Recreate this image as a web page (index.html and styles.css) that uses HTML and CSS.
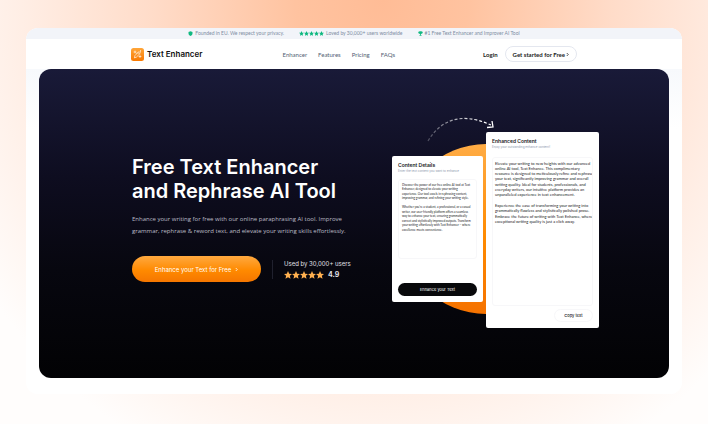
FILE: index.html
```html
<!DOCTYPE html>
<html lang="en">
<head>
<meta charset="utf-8">
<meta name="viewport" content="width=device-width, initial-scale=1">
<title>Text Enhancer</title>
<link rel="stylesheet" href="styles.css">
</head>
<body>
<svg class="sprite" aria-hidden="true">
  <symbol id="star" viewBox="1 1 18 18"><path d="M10 1l2.700 6 6.300.6-4.800 4.300 1.500 6.600L10 15l-5.700 3.500 1.500-6.600L1 7.600l6.300-.6z"/></symbol>
</svg>
<div class="window">
  <div class="topbar">
    <span class="perk">
      <svg class="perk-icon" viewBox="0 0 20 20" aria-hidden="true"><path d="M10 1l8 3v6c0 5-3.500 8-8 9.500C5.500 18 2 15 2 10V4z"/></svg>
      Founded in EU. We respect your privacy.
    </span>
    <span class="perk">
      <span class="perk-stars" aria-hidden="true">
        <svg><use href="#star"/></svg><svg><use href="#star"/></svg><svg><use href="#star"/></svg><svg><use href="#star"/></svg><svg><use href="#star"/></svg>
      </span>
      Loved by 30,000+ users worldwide
    </span>
    <span class="perk">
      <svg class="perk-icon" viewBox="0 0 20 20" aria-hidden="true"><path d="M5 1h10v2h4c0 5-1 7-5 8-1 1-2 2-2.500 2.500V16H14v3H6v-3h2.500v-2.500C8 13 7 12 6 11 2 10 1 8 1 3h4z"/></svg>
      #1 Free Text Enhancer and Improver AI Tool
    </span>
  </div>
  <header class="nav">
    <a class="brand" href="#">
      <svg class="brand-mark" viewBox="0 0 26 26" aria-hidden="true">
        <defs><linearGradient id="mark" x1="0" y1="0" x2="0" y2="1"><stop offset="0" stop-color="#ffa63a"/><stop offset="1" stop-color="#f97900"/></linearGradient></defs>
        <rect width="26" height="26" rx="5" fill="url(#mark)"/>
        <g fill="none" stroke="#fff" stroke-width="1.300" stroke-linecap="round" stroke-linejoin="round">
          <path d="M7 19l1-4 8-8 3 3-8 8z"/><path d="M14 9l3 3"/><path d="M8 6v4M6 8h4M10.500 10l1 1M18 15v4M16 17h4M19 5v2"/>
        </g>
      </svg>
      Text Enhancer
    </a>
    <nav class="links">
      <a href="#">Enhancer</a><a href="#">Features</a><a href="#">Pricing</a><a href="#">FAQs</a>
    </nav>
    <div class="account">
      <a class="login" href="#">Login</a>
      <a class="start" href="#">Get started for Free <svg class="chevron" viewBox="0 0 4 6" aria-hidden="true"><path d="M1 1l2 2-2 2"/></svg></a>
    </div>
  </header>
  <main class="stage">
    <section class="hero">
      <div class="copy">
        <h1>Free Text Enhancer<br>and Rephrase AI Tool</h1>
        <p class="lead">Enhance your writing for free with our online paraphrasing AI tool. Improve<br>grammar, rephrase &amp; reword text, and elevate your writing skills effortlessly.</p>
        <div class="cta-row">
          <button class="cta" type="button">Enhance your Text for Free <svg class="chevron" viewBox="0 0 4 6" aria-hidden="true"><path d="M1 1l2 2-2 2"/></svg></button>
          <div class="proof">
            <span>Used by 30,000+ users</span>
            <span class="rating">
              <span class="rating-stars" aria-hidden="true"><svg><use href="#star"/></svg><svg><use href="#star"/></svg><svg><use href="#star"/></svg><svg><use href="#star"/></svg><svg><use href="#star"/></svg></span>
              <strong>4.9</strong>
            </span>
          </div>
        </div>
      </div>
      <div class="demo">
        <div class="disc"></div>
        <svg class="arrow" viewBox="0 0 70 26" aria-hidden="true">
          <defs><linearGradient id="fade" x1="0" y1="0" x2="1" y2="0"><stop offset="0" stop-color="#fff" stop-opacity=".25"/><stop offset=".8" stop-color="#fff"/></linearGradient></defs>
          <path d="M2 24C14 4 34-6 65 8" fill="none" stroke="url(#fade)" stroke-width="1.200" stroke-dasharray="3 2"/>
          <path d="M66 4l1 6-6 .5" fill="none" stroke="#fff" stroke-width="1.300"/>
        </svg>
        <section class="card card-input">
          <h2><label for="source">Content Details</label></h2>
          <p>Enter the text content you want to enhance</p>
          <textarea id="source" readonly>Discover the power of our free online AI tool at Text
Enhancer, designed to elevate your writing
experience. Our tool excels in rephrasing content,
improving grammar, and refining your writing style.

Whether you're a student, a professional, or a casual
writer, our user-friendly platform offers a seamless
way to enhance your text, ensuring grammatically
correct and stylistically improved outputs. Transform
your writing effortlessly with Text Enhancer – where
excellence meets convenience.</textarea>
          <button class="enhance" type="button">Enhance your Text</button>
        </section>
        <section class="card card-output">
          <h2><label for="result">Enhanced Content</label></h2>
          <p>Enjoy your outstanding enhance content!</p>
          <textarea id="result" readonly>Elevate your writing to new heights with our advanced
online AI tool, Text Enhance. This complimentary
resource is designed to meticulously refine and rephrase
your text, significantly improving grammar and overall
writing quality. Ideal for students, professionals, and
everyday writers, our intuitive platform provides an
unparalleled experience in text enhancement.

Experience the ease of transforming your writing into
grammatically flawless and stylistically polished prose.
Embrace the future of writing with Text Enhance, where
exceptional writing quality is just a click away.</textarea>
          <button class="copy-text" type="button">Copy text</button>
        </section>
      </div>
    </section>
  </main>
</div>
</body>
</html>
```
FILE: styles.css
```css
* { box-sizing: border-box; }

body {
  margin: 0;
  min-height: 100vh;
  padding: 28px 26px 30px;
  display: flex;
  font-family: Inter, "Liberation Sans", sans-serif;
  background:
    radial-gradient(ellipse 68% 120% at 54% 0, #ffbc96 0%, #ffc3a0 18%, #ffdcc9 48%, #ffeee5 75%, rgba(255, 250, 247, 0) 100%),
    #fffdfc;
}

a { color: inherit; text-decoration: none; }
h1, h2, p { margin: 0; }
button, textarea { font-family: inherit; border: 0; }
.sprite { position: absolute; width: 0; height: 0; }
.chevron { width: 3px; height: 5px; fill: none; stroke: currentColor; }

.window {
  flex: 1;
  display: flex;
  flex-direction: column;
  border-radius: 12px;
  overflow: hidden;
  background: #fff;
}

.topbar {
  height: 11px;
  padding-bottom: 1px;
  display: flex;
  justify-content: center;
  align-items: center;
  gap: 15px;
  background: #f2f4f9;
  color: #7e8da3;
  font-family: Lato, sans-serif;
  font-size: 5px;
  line-height: 6px;
}
.perk { display: flex; align-items: center; gap: 2px; white-space: nowrap; }
.perk svg { fill: #10b981; }
.perk-icon { width: 5px; height: 5px; }
.perk-stars { display: flex; }
.perk-stars svg { width: 5px; height: 5px; }

.nav {
  height: 30px;
  padding: 0 105px;
  display: flex;
  justify-content: space-between;
  align-items: center;
  white-space: nowrap;
}
.brand { display: flex; align-items: center; gap: 3px; font-size: 8px; font-weight: 600; color: #111; }
.brand-mark { width: 13px; height: 13px; }
.links { display: flex; gap: 11px; margin-right: 8px; font-family: Lato, sans-serif; font-size: 6px; color: #536074; }
.account { display: flex; align-items: center; gap: 7px; font-family: Lato, sans-serif; font-size: 6px; font-weight: 700; color: #222; }
.start {
  height: 16px;
  padding: 0 7px;
  display: flex;
  align-items: center;
  gap: 1px;
  border: 1px solid #e4e7ef;
  border-radius: 8px;
}

.stage {
  flex: 1;
  display: flex;
  padding: 0 13px 16px;
  background: linear-gradient(#f7f9fc, #fff 60px);
}
.hero {
  flex: 1;
  display: flex;
  justify-content: space-between;
  align-items: center;
  padding: 0 70px 0 93px;
  border-radius: 12px;
  background: linear-gradient(#191a38, #0e0d20 35%, #07070f 65%, #020204);
  color: #fff;
}

.copy { white-space: nowrap; padding-bottom: 10px; }
h1 { font-size: 20px; font-weight: 600; line-height: 24px; }
.lead { margin-top: 10px; font-family: "Open Sans", sans-serif; font-size: 6px; line-height: 12px; color: #bcbcc6; }
.cta-row { margin-top: 19px; display: flex; align-items: center; gap: 11px; }
.cta {
  width: 129px;
  height: 26px;
  display: flex;
  justify-content: center;
  align-items: center;
  gap: 4px;
  border-radius: 13px;
  background: linear-gradient(#ffa940, #ff8a00 55%, #f57600);
  color: #fff;
  font-size: 6px;
}
.proof {
  display: flex;
  flex-direction: column;
  font-size: 6px;
  line-height: 8px;
  color: #e0e0e6;
  padding-left: 11px;
  gap: 3px;
  border-left: 1px solid #20212e;
}
.rating { display: flex; align-items: center; gap: 4px; }
.rating strong { font-size: 7px; }
.rating-stars { display: flex; }
.rating-stars svg { width: 8px; height: 8px; fill: #ffb04f; }

.demo {
  position: relative;
  display: flex;
  align-items: center;
  gap: 3px;
  padding-top: 12px;
}
.disc {
  position: absolute;
  top: 24px;
  left: 9px;
  width: 170px;
  height: 170px;
  border-radius: 50%;
  background: linear-gradient(#ffac45, #ff8a00 55%, #f57200);
}
.arrow { position: absolute; top: -3px; left: 34px; width: 70px; height: 26px; }
.card {
  position: relative;
  display: flex;
  flex-direction: column;
  padding: 6px;
  border-radius: 2px;
  background: #fff;
  color: #181a22;
  white-space: nowrap;
}
.card h2 { font-size: 5px; font-weight: 600; line-height: 7px; }
.card p { font-size: 3px; line-height: 5px; color: #8d99ad; }
.card textarea {
  width: 100%;
  resize: none;
  overflow: hidden;
  outline: 0;
  border: 1px solid #f7f7f9;
  border-radius: 3px;
  background: #fff;
  color: #181a22;
  font-family: Lato, sans-serif;
  white-space: pre;
}
.card-input { width: 91px; height: 146px; margin-bottom: 2px; }
.card-input textarea { margin-top: 5px; height: 80px; padding: 3px; font-size: 3px; line-height: 1.5; }
.card-output { width: 113px; height: 196px; }
.card-output textarea { margin-top: 7px; height: 149px; padding: 3px 2px; font-size: 4px; line-height: 1.33; }
.enhance {
  margin-top: auto;
  height: 13px;
  padding: 0;
  border-radius: 7px;
  background: #08090b;
  color: #fff;
  font-size: 4px;
}
.copy-text {
  align-self: flex-end;
  margin-top: auto;
  width: 39px;
  height: 13px;
  padding: 0;
  border: 1px solid #f7f7f9;
  border-radius: 7px;
  background: #fff;
  color: #181a22;
  font-size: 4px;
  font-weight: 500;
}
```
